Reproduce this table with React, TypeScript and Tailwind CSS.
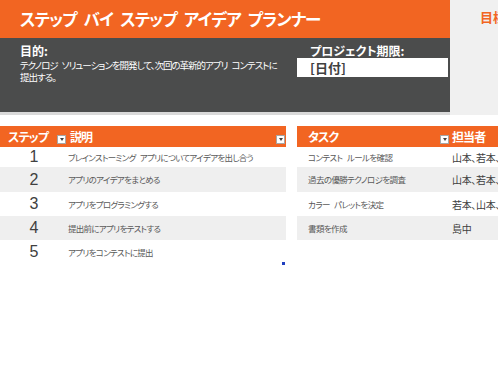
const font = "font-['Noto_Sans_CJK_JP','Noto_Sans',sans-serif] [font-feature-settings:'palt']";

function FilterButton() {
  return (
    <span className="flex h-[9px] w-[9px] items-center justify-center border border-[#a6a6a6] bg-white">
      <span className="h-0 w-0 border-x-[2.5px] border-t-[3px] border-x-transparent border-t-[#404040]" />
    </span>
  );
}

const steps = [
  { n: 1, text: "ブレインストーミング アプリについてアイデアを出し合う" },
  { n: 2, text: "アプリのアイデアをまとめる" },
  { n: 3, text: "アプリをプログラミングする" },
  { n: 4, text: "提出前にアプリをテストする" },
  { n: 5, text: "アプリをコンテストに提出" },
];

const tasks = [
  { task: "コンテスト ルールを確認", owner: "山本、若本、" },
  { task: "過去の優勝テクノロジを調査", owner: "山本、若本、" },
  { task: "カラー パレットを決定", owner: "若本、山本、" },
  { task: "書類を作成", owner: "島中" },
];

const rowHeights = ["h-[20px]", "h-[25px]", "h-[24px]", "h-[24px]", "h-[24px]"];

export default function App() {
  return (
    <div className={`h-[382px] w-[498px] overflow-hidden bg-white ${font}`}>
      <div className="flex">
        <div className="w-[450px] shrink-0">
          <div className="flex h-[38px] items-center bg-[#f26522] pl-[20px]">
            <h1 className="whitespace-nowrap text-[16.5px] font-bold tracking-[-0.8px] text-white [word-spacing:4px]">
              ステップ バイ ステップ アイデア プランナー
            </h1>
          </div>
          <div className="flex h-[77px] border-b-[3px] border-[#d9d9d9] bg-[#4b4c4c] pt-[5px]">
            <div className="w-[277px] shrink-0 pl-[20px] text-white">
              <div className="text-[12px] font-bold leading-[16px]">目的:</div>
              <p className="whitespace-nowrap text-[9.5px] leading-[12px] tracking-[-1px] [word-spacing:3px]">
                テクノロジ ソリューションを開発して、次回の革新的アプリ コンテストに
                <br />
                提出する。
              </p>
            </div>
            <div className="ml-[20px] flex-1">
              <div className="pl-[13px] text-[12px] font-bold leading-[15px] text-white">プロジェクト期限:</div>
              <div className="mr-[2px] flex h-[19px] items-center bg-white pl-[13px] text-[13px] font-semibold text-[#404040]">
                [日付]
              </div>
            </div>
          </div>
        </div>
        <div className="h-[115px] min-w-0 flex-1 overflow-hidden bg-[#f0f0f0] pl-[30px] pt-[3px]">
          <span className="whitespace-nowrap text-[13px] font-bold text-[#f26522]">目標</span>
        </div>
      </div>

      <div className="mt-[11px] flex gap-[11px]">
        <div className="relative w-[286px] shrink-0">
          <div className="flex h-[21px] items-center bg-[#f26522] text-[12px] font-bold tracking-[-0.9px] text-white">
            <div className="flex w-[68px] items-center justify-between pl-[8px] pr-[2px]">
              <span>ステップ</span>
              <span className="mt-[6px]"><FilterButton /></span>
            </div>
            <div className="flex flex-1 items-center justify-between pl-[2px] pr-[1px]">
              <span>説明</span>
              <span className="mt-[6px]"><FilterButton /></span>
            </div>
          </div>
          {steps.map((s, i) => (
            <div
              key={s.n}
              className={`flex items-center ${rowHeights[i]} ${i % 2 === 1 ? "bg-[#efefef]" : "bg-white"}`}
            >
              <span className="w-[68px] shrink-0 text-center font-['Liberation_Sans',sans-serif] text-[16px] text-[#404040]">
                {s.n}
              </span>
              <span className="whitespace-nowrap text-[8.5px] tracking-[-0.7px] text-[#595959] [word-spacing:3px]">
                {s.text}
              </span>
            </div>
          ))}
          <span className="absolute bottom-[-1px] right-[1px] h-[3px] w-[3px] bg-[#1f3fbf]" />
        </div>

        <div className="min-w-0 flex-1">
          <div className="flex h-[21px] items-center bg-[#f26522] text-[12px] font-bold tracking-[-0.9px] text-white">
            <div className="flex w-[153px] shrink-0 items-center justify-between pl-[11px] pr-[1px]">
              <span>タスク</span>
              <span className="mt-[6px]"><FilterButton /></span>
            </div>
            <div className="whitespace-nowrap pl-[2px]">担当者</div>
          </div>
          {tasks.map((t, i) => (
            <div
              key={t.task}
              className={`flex items-center ${rowHeights[i]} ${i % 2 === 1 ? "bg-[#efefef]" : "bg-white"}`}
            >
              <span className="w-[155px] shrink-0 whitespace-nowrap pl-[11px] text-[8.5px] tracking-[-0.6px] text-[#595959] [word-spacing:3px]">
                {t.task}
              </span>
              <span className="whitespace-nowrap text-[10px] tracking-[-0.3px] text-[#404040]">{t.owner}</span>
            </div>
          ))}
        </div>
      </div>
    </div>
  );
}
